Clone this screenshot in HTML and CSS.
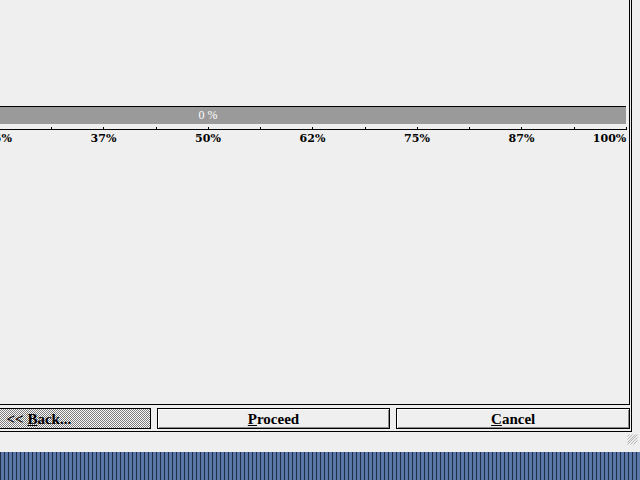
FILE: index.html
```html
<!DOCTYPE html>
<html>
<head>
    <title>Progress</title>
    <link rel="stylesheet" href="styles.css">
</head>
<body>
    <div class="window">
        <div class="panel">
            <div class="bar">
                <span class="bar-text">0 %</span>
            </div>
            <svg class="ruler" width="837" height="4" viewBox="0 0 837 4">
                <path d="M0 2.5H837M0.5 0v2M52.5 0v2M104.5 0v2M157.5 0v2M209.5 0v2M261.5 0v2M313.5 0v2M366.5 0v2M418.5 0v2M470.5 0v2M522.5 0v2M575.5 0v2M627.5 0v2M679.5 0v2M731.5 0v2M784.5 0v2M836.5 0v2" stroke="#000" stroke-width="1" fill="none" shape-rendering="crispEdges"/>
            </svg>
            <div class="labels">
                <span>0%</span>
                <span>12%</span>
                <span>25%</span>
                <span>37%</span>
                <span>50%</span>
                <span>62%</span>
                <span>75%</span>
                <span>87%</span>
                <span class="last">100%</span>
            </div>
        </div>
        <div class="buttons">
            <button class="btn btn-back">&lt;&lt; <u>B</u>ack...</button>
            <button class="btn"><u>P</u>roceed</button>
            <button class="btn"><u>C</u>ancel</button>
        </div>
    </div>

    <svg class="grip" width="11" height="11" viewBox="0 0 11 11">
        <path d="M10.5 0.5L0.5 10.5M10.5 3.5L3.5 10.5M10.5 6.5L6.5 10.5M8.5 0.5L0.5 8.5M5.5 0.5L0.5 5.5M2.5 0.5L0.5 2.5" stroke="#b4b4b4" stroke-width="1" fill="none"/>
    </svg>

    <div class="taskbar"></div>
</body>
</html>
```

FILE: styles.css
```css
html, body {
    margin: 0;
    padding: 0;
}
body {
    display: flow-root;
    position: relative;
    width: 640px;
    height: 480px;
    overflow: hidden;
    background: #efefef;
    font-family: "Liberation Serif", serif;
}
.window {
    width: 860px;
    margin: -40px 0 0 -230px;
    border: 1px solid #000;
    padding: 0 0 2px 0;
}
.panel {
    box-sizing: border-box;
    height: 444px;
    margin-right: 1px;
    border: 1px solid #000;
    padding: 144px 3px 0 18px;
}
.bar {
    height: 17px;
    border-top: 1px solid #000;
    background: #9a9a9a;
    position: relative;
}
.bar-text {
    position: absolute;
    left: 418px;
    top: 1px;
    transform: translateX(-50%);
    color: #fff;
    font-size: 12px;
    line-height: 14px;
    white-space: nowrap;
}
.ruler {
    display: block;
    margin-top: 3px;
}
.labels {
    display: grid;
    grid-template-columns: repeat(9, 104.5px);
    margin-left: -52.25px;
    margin-top: 1px;
    font-family: "DejaVu Serif", serif;
    font-size: 11px;
    font-weight: bold;
    line-height: 14px;
}
.labels span {
    text-align: center;
}
.labels .last {
    text-align: right;
    padding-right: 52px;
}
.buttons {
    display: flex;
    gap: 6px;
    margin-top: 3px;
    padding: 0 1px 0 146px;
}
.btn {
    flex: 1 1 0;
    height: 21px;
    padding: 0;
    border: 1px solid #000;
    background: #efefef;
    box-shadow: inset 1px 1px #fff, inset -1px -1px #8a8a8a;
    font-family: "Liberation Serif", serif;
    font-size: 15px;
    font-weight: bold;
    line-height: 18px;
    color: #000;
}
.btn-back {
    text-indent: 10px;
    background: repeating-conic-gradient(#7c7c7c 0 25%, #fafafa 0 50%) 0 0 / 2px 2px;
    box-shadow: none;
}
.grip {
    position: absolute;
    left: 627px;
    top: 434px;
}
.taskbar {
    height: 28px;
    margin-top: 20px;
    background: repeating-linear-gradient(90deg, #1e2c48 0 1px, #5877a6 1px 4px);
}
```
